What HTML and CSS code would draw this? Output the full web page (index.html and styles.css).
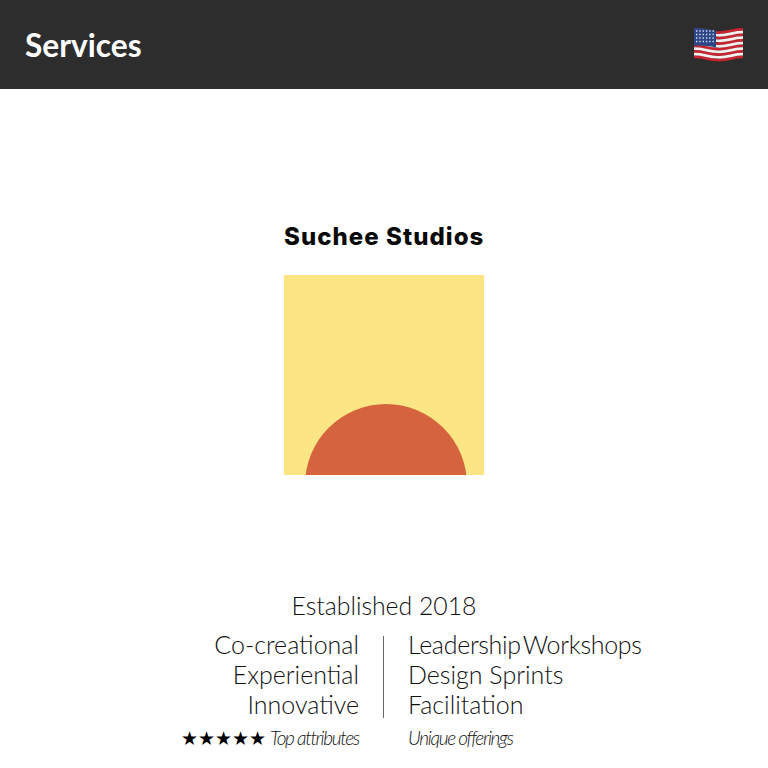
FILE: index.html
```html
<!DOCTYPE html>
<html lang="en">
<head>
  <meta charset="UTF-8" />
  <title>Services</title>
  <link rel="stylesheet" href="styles.css">
</head>
<body>

<div class="navbar">
  <div class="nav-title">Services</div>
  <svg class="flag" width="49" height="36" viewBox="0 0 49 36">
    <defs>
      <path id="stripe" d="M0 0C8-.6 14 2.600 24 3S41-.6 49 0" fill="none" stroke-width="2.750"/>
    </defs>
    <g stroke="#c8232f">
      <use href="#stripe" y="2.500"/><use href="#stripe" y="8"/><use href="#stripe" y="13.500"/>
      <use href="#stripe" y="19"/><use href="#stripe" y="24.500"/><use href="#stripe" y="30"/>
    </g>
    <g stroke="#f4eeee">
      <use href="#stripe" y="5.250"/><use href="#stripe" y="10.750"/><use href="#stripe" y="16.250"/>
      <use href="#stripe" y="21.750"/><use href="#stripe" y="27.250"/>
    </g>
    <path d="M0 1.200C8 .6 14 2.600 22 3.800V20.400C14 19.200 8 18.200 0 18.800Z" fill="#2c4688"/>
    <path d="M2 4H21M2 7.500H21M2 11H21M2 14.500H21" stroke="#dfe6f5" stroke-width="1.300" stroke-dasharray="1.300 2"/>
  </svg>
</div>

<div class="main">
  <div class="logo">
    <div class="logo-name">Suchee Studios</div>
    <div class="logo-square">
      <div class="logo-sun"></div>
    </div>
  </div>

  <div class="about">
    <div class="established">Established 2018</div>
    <div class="columns">
      <div class="col col-left">
        <div>Co-creational</div>
        <div>Experiential</div>
        <div>Innovative</div>
      </div>
      <div class="divider"></div>
      <div class="col">
        <div class="tight">Leadership Workshops</div>
        <div>Design Sprints</div>
        <div>Facilitation</div>
      </div>
    </div>
    <div class="columns captions">
      <div class="col-left"><span class="stars">★★★★★</span> <em>Top attributes</em></div>
      <div></div>
      <div><em>Unique offerings</em></div>
    </div>
  </div>
</div>

</body>
</html>
```

FILE: styles.css
```css
body {
  margin: 0;
  font-family: 'Lato', sans-serif;
  background-color: #fff;
  color: #111;
}

.navbar {
  display: flex;
  justify-content: space-between;
  align-items: center;
  height: 89px;
  padding: 0 25px;
  box-sizing: border-box;
  background-color: #2d2d2d;
}

.nav-title {
  font-size: 31.700px;
  font-weight: 700;
  color: #fff;
}

.flag {
  display: block;
}

.main {
  display: flex;
  flex-direction: column;
  align-items: center;
}

.logo {
  width: 200px;
  margin-top: 133px;
}

.logo-name {
  font-family: 'Inter', sans-serif;
  font-size: 24px;
  font-weight: 800;
  line-height: 30px;
  letter-spacing: 1.050px;
  text-align: center;
  white-space: nowrap;
  color: #0a0a0a;
}

.logo-square {
  display: flex;
  justify-content: center;
  align-items: flex-end;
  height: 200px;
  margin-top: 23px;
  background-color: #fbe584;
  overflow: hidden;
}

.logo-sun {
  flex: none;
  width: 162px;
  height: 162px;
  margin: 0 0 -91px 4px;
  border-radius: 50%;
  background-color: #d4633e;
}

.about {
  width: 100%;
  margin-top: 115px;
  font-weight: 300;
  font-size: 25px;
}

.established {
  line-height: 32px;
  font-size: 24.800px;
  text-align: center;
}

.columns {
  display: grid;
  grid-template-columns: 1fr 1px 1fr;
  column-gap: 24px;
  margin: 7px 0 0 -1px;
  line-height: 30px;
}

.col-left {
  text-align: right;
}

.divider {
  margin: 7px 0 1px;
  background-color: #666;
}

.tight {
  word-spacing: -4px;
  letter-spacing: -0.300px;
}

.captions {
  margin-top: 6px;
  font-size: 19px;
  line-height: 26px;
  letter-spacing: -1.300px;
}

.stars {
  font-family: 'DejaVu Sans', sans-serif;
  font-size: 18.500px;
  letter-spacing: 0;
  color: #000;
}
```
